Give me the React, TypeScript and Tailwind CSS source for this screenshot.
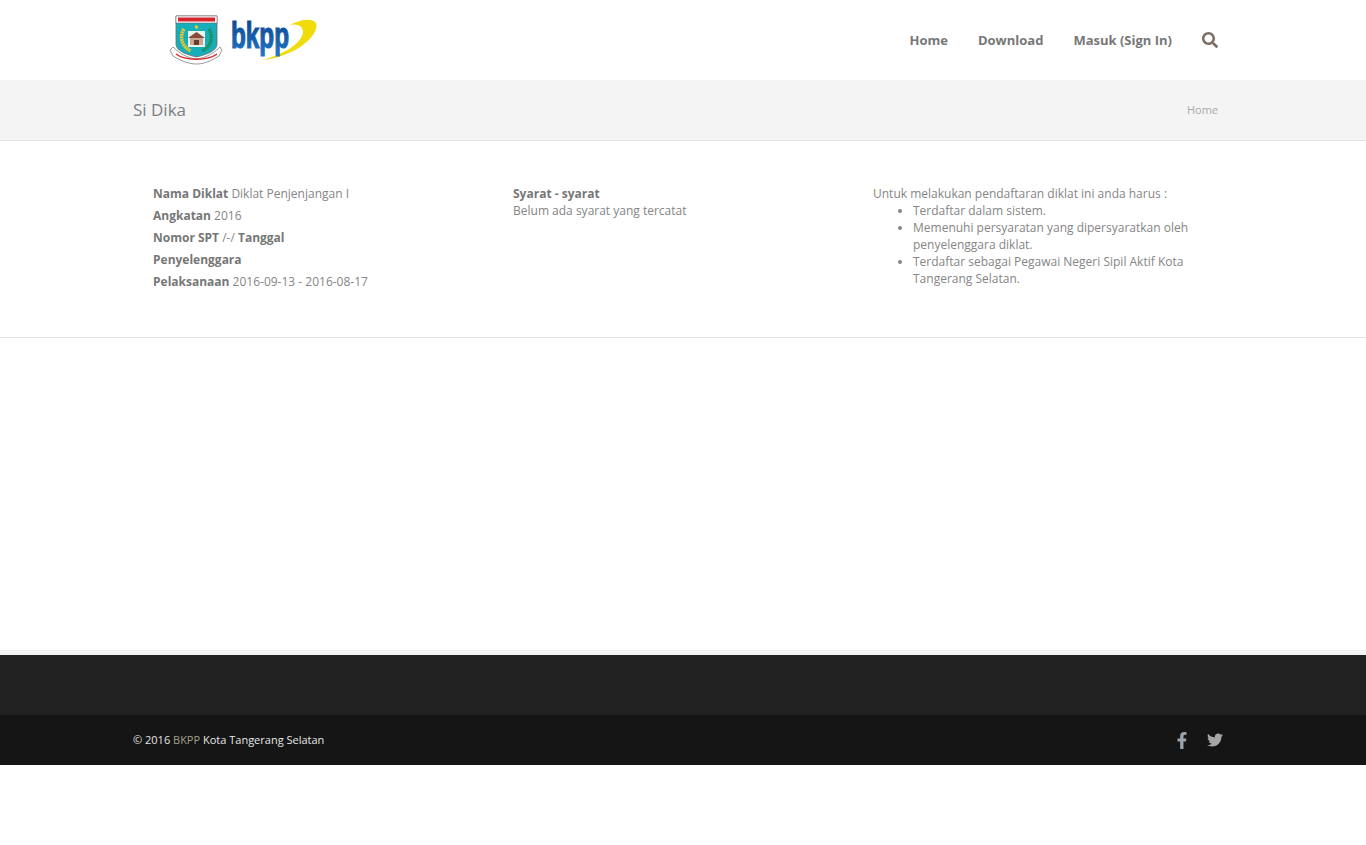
import { FaFacebookF, FaTwitter, FaSearch } from "react-icons/fa";

function Logo() {
  return (
    <svg width="150" height="52" viewBox="0 0 150 52" className="block">
      <defs>
        <linearGradient id="bkppBlue" x1="0" y1="0" x2="0" y2="1">
          <stop offset="0" stopColor="#0b3f8c" />
          <stop offset="1" stopColor="#1f77c4" />
        </linearGradient>
      </defs>
      {/* emblem */}
      <path d="M7 2 H48 V30 C48 36 40 40 27.5 43 C15 40 7 36 7 30 Z" fill="#16aebb" stroke="#6b6b6b" strokeWidth="0.8" />
      <rect x="7" y="2" width="41" height="7" fill="#fff" stroke="#6b6b6b" strokeWidth="0.6" />
      <rect x="9" y="3.5" width="37" height="4" fill="#d8232a" />
      <path d="M15 15 C10 23 13 33 22 37" fill="none" stroke="#e6c82c" strokeWidth="3.5" strokeDasharray="2 0.6" />
      <path d="M40 15 C45 23 42 33 33 37" fill="none" stroke="#1f8f5a" strokeWidth="3.5" strokeDasharray="2 0.6" />
      <circle cx="27.5" cy="13" r="1.8" fill="#e6c82c" />
      <rect x="19" y="17" width="17" height="16" fill="#e8f4ec" />
      <path d="M19 24 L27.5 18 L36 24 Z" fill="#8a4b3c" />
      <rect x="21" y="24" width="13" height="7" fill="#c9a591" />
      <rect x="25" y="26" width="5" height="5" fill="#6e3b30" />
      <path d="M1 36 L4 33 C11 40 19 44 27.5 45 C36 44 44 40 51 33 L53 36 L50 42 C42 47 35 50 27.5 50 C20 50 12 47 4 42 Z" fill="#fff" stroke="#555" strokeWidth="0.6" />
      <path d="M7 40 C16 47 39 47 48 40" fill="none" stroke="#d8232a" strokeWidth="1.3" />
      {/* swoosh */}
      <path d="M121 11 C130 6 141 4 146 8 C151 13 143 26 128 35 C117 41 105 45 93 46 C113 41 133 30 134 18 C134 12 128 9 121 11 Z" fill="#f0dc0a" />
      <text x="62" y="34" fontFamily="'Liberation Sans', sans-serif" fontWeight="700" fontSize="36" textLength="58" lengthAdjust="spacingAndGlyphs" fill="url(#bkppBlue)" stroke="url(#bkppBlue)" strokeWidth="1.2">bkpp</text>
    </svg>
  );
}

export default function App() {
  return (
    <div className="min-h-[845px] bg-white font-['Open_Sans',sans-serif] text-[12px] text-[#858585]">
      <header className="h-20 pl-[169px] pr-[148px] flex items-center justify-between bg-white">
        <Logo />
        <nav className="flex items-center gap-[30px] text-[13px] font-bold text-[#777777] leading-5">
          <a>Home</a>
          <a>Download</a>
          <a>Masuk (Sign In)</a>
          <FaSearch className="w-4 h-4 text-[#7b6f68]" />
        </nav>
      </header>

      <div className="h-[61px] bg-[#f4f4f4] border-b border-[#e4e4e4] pl-[133px] pr-[148px] flex items-center justify-between">
        <h1 className="text-[17px] text-[#7a8085] font-normal">Si Dika</h1>
        <span className="text-[11px] text-[#a8a8a8]">Home</span>
      </div>

      <main className="h-[197px] border-b border-[#e4e4e4] pl-[153px] pt-[44px] grid grid-cols-[360px_360px_340px] leading-[17px]">
        <div className="leading-[22px] -mt-[2px]">
          <p><b className="text-[#777777]">Nama Diklat</b> Diklat Penjenjangan I</p>
          <p><b className="text-[#777777]">Angkatan</b> 2016</p>
          <p><b className="text-[#777777]">Nomor SPT</b> /-/ <b className="text-[#777777]">Tanggal</b></p>
          <p><b className="text-[#777777]">Penyelenggara</b></p>
          <p><b className="text-[#777777]">Pelaksanaan</b> 2016-09-13 - 2016-08-17</p>
        </div>
        <div>
          <p><b className="text-[#777777]">Syarat - syarat</b></p>
          <p>Belum ada syarat yang tercatat</p>
        </div>
        <div>
          <p>Untuk melakukan pendaftaran diklat ini anda harus :</p>
          <ul className="list-disc pl-10 w-[330px]">
            <li>Terdaftar dalam sistem.</li>
            <li>Memenuhi persyaratan yang dipersyaratkan oleh penyelenggara diklat.</li>
            <li>Terdaftar sebagai Pegawai Negeri Sipil Aktif Kota Tangerang Selatan.</li>
          </ul>
        </div>
      </main>

      <div className="h-[312px]" />
      <div className="h-[5px] bg-[#f4f4f4]" />
      <div className="h-[60px] bg-[#222222]" />
      <footer className="h-[50px] bg-[#151515] pl-[133px] pr-[143px] flex items-center justify-between text-[11px] text-[#e6e6e6]">
        <p>© 2016 <span className="text-[#a3a08f]">BKPP</span> Kota Tangerang Selatan</p>
        <div className="flex items-center gap-[17px] text-[#a6a6a6]">
          <FaFacebookF className="w-[16px] h-[17px] text-[#9aa4ad]" />
          <FaTwitter className="w-[16px] h-[16px]" />
        </div>
      </footer>
    </div>
  );
}
